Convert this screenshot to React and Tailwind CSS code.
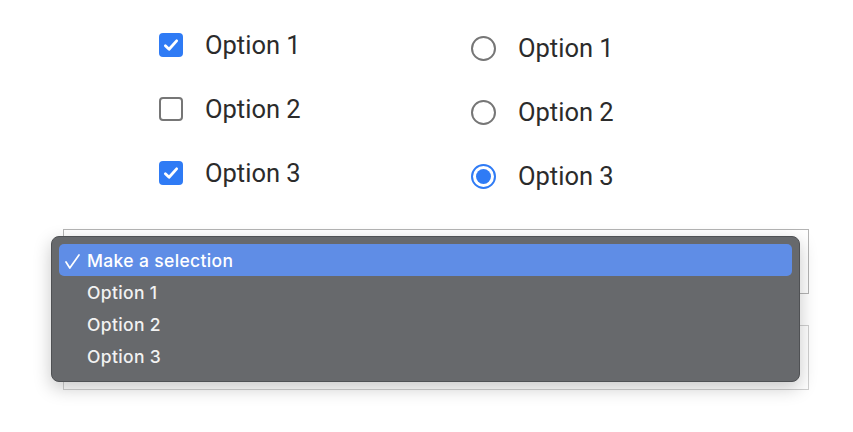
import React from "react";

function Check({ checked }) {
  if (checked) {
    return (
      <div className="w-6 h-6 rounded-[4px] bg-[#2f7bf5] flex items-center justify-center">
        <svg width="18" height="18" viewBox="0 0 16 16" fill="none">
          <path d="M3 8.6 L6.3 11.8 L13 4.3" stroke="white" strokeWidth="2.5" strokeLinecap="round" strokeLinejoin="round" />
        </svg>
      </div>
    );
  }
  return <div className="w-6 h-6 rounded-[4px] border-2 border-[#767676] bg-white" />;
}

function Radio({ checked }) {
  if (checked) {
    return (
      <div className="w-[25px] h-[25px] rounded-full border-2 border-[#2f7bf5] flex items-center justify-center bg-white">
        <div className="w-[15px] h-[15px] rounded-full bg-[#2f7bf5]" />
      </div>
    );
  }
  return <div className="w-[25px] h-[25px] rounded-full border-2 border-[#767676] bg-white" />;
}

export default function App() {
  const opts = ["Option 1", "Option 2", "Option 3"];
  return (
    <div className="w-[853px] h-[432px] bg-white relative overflow-hidden" style={{ fontFamily: "Roboto, 'Liberation Sans', sans-serif" }}>
      <div className="flex">
        <div className="flex flex-col pt-[13px] pl-[159px] w-[471px]">
          {opts.map((o, i) => (
            <div key={o} className="h-16 flex items-center gap-[22px]">
              <Check checked={i !== 1} />
              <span className="text-[25.5px] leading-none text-[#2b2b2b] pt-[1px]">{o}</span>
            </div>
          ))}
        </div>
        <div className="flex flex-col pt-[16px]">
          {opts.map((o, i) => (
            <div key={o} className="h-16 flex items-center gap-[22px]">
              <Radio checked={i === 2} />
              <span className="text-[25.5px] leading-none text-[#2b2b2b] pt-[1px]">{o}</span>
            </div>
          ))}
        </div>
      </div>
      <div className="flex flex-col gap-[31px] pl-[63px] pt-[21px] relative">
        <div className="w-[746px] h-[65px] border border-[#b4b4b4] bg-white" />
        <div className="w-[746px] h-[65px] border border-[#d0d0d0] bg-white" />
        <div
          className="absolute left-[51px] top-[28px] w-[749px] h-[146px] rounded-[8px] bg-[#67696c] border border-[#4f5154] shadow-[0_6px_18px_rgba(0,0,0,0.22)] px-[7px] pt-[7px]"
          style={{ fontFamily: "Inter, 'Noto Sans', sans-serif" }}
        >
          <div className="h-8 rounded-[5px] bg-[#5f8de6] flex items-center text-white text-[17.5px] font-medium tracking-[0.35px] pt-[2px]">
            <span className="w-[28px] pl-[6px] flex items-center">
              <svg width="15" height="15" viewBox="0 0 15 15" fill="none">
                <path d="M1 8 L4.8 14 L14 1" stroke="white" strokeWidth="1.7" strokeLinecap="round" strokeLinejoin="round" />
              </svg>
            </span>
            <span>Make a selection</span>
          </div>
          {opts.map((o) => (
            <div key={o} className="h-8 flex items-center text-[#f2f2f2] text-[17.5px] font-medium tracking-[0.35px] pl-[28px] pt-[2px]">
              {o}
            </div>
          ))}
        </div>
      </div>
    </div>
  );
}
